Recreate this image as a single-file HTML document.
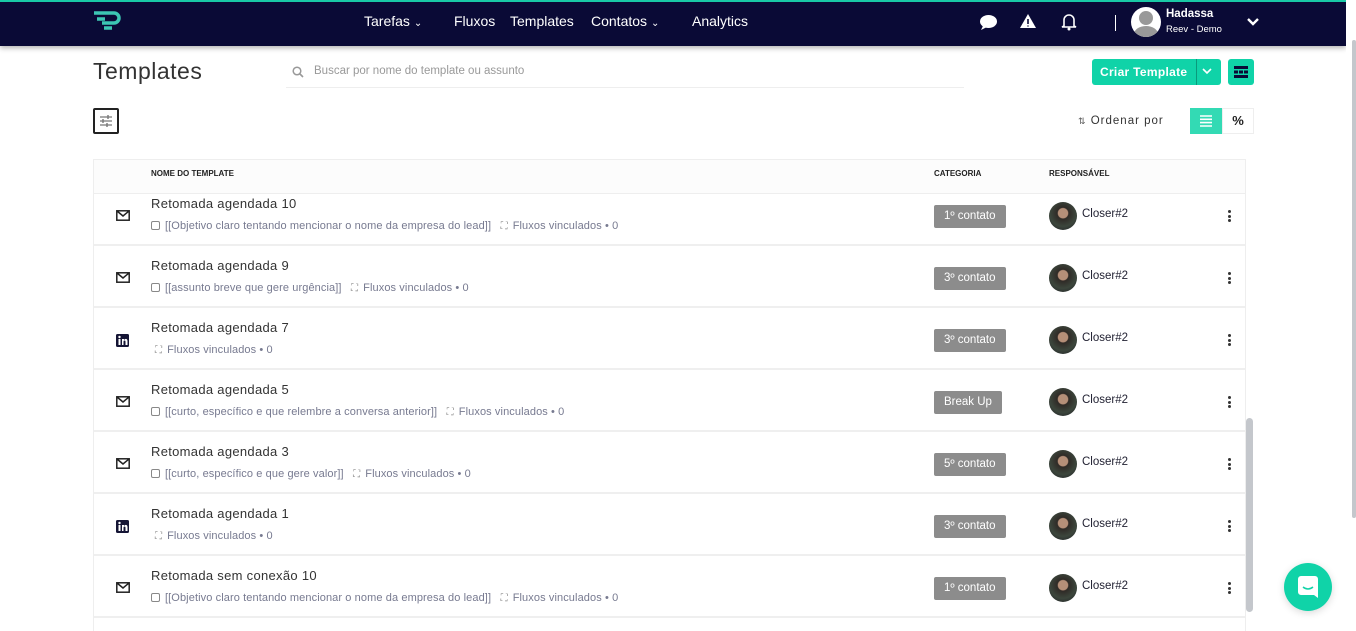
<!DOCTYPE html>
<html><head><meta charset="utf-8"><style>
*{box-sizing:border-box;margin:0;padding:0}
body{width:1356px;height:631px;overflow:hidden;background:#fff;font-family:"Liberation Sans",sans-serif;color:#2b2b3b;position:relative}
.nav{position:absolute;left:0;top:0;width:1346px;height:46px;background:#0a0a36;border-top:2px solid #19c9a6;box-shadow:0 2px 5px rgba(0,0,0,.3)}
.nav .it{position:absolute;top:11px;color:#fff;font-size:14px}
.abs{position:absolute}
.title{left:93px;top:58px;font-size:23px;color:#333;letter-spacing:.5px}
.search{left:286px;top:58px;width:678px;height:30px;border-bottom:1px solid #eee;font-size:11.5px;color:#999}
.btn{background:#10d3a8;color:#fff;border-radius:3px}
.table{left:93px;top:159px;width:1153px;height:472px;border:1px solid #eee;border-bottom:none;overflow:hidden}
.head{height:34px;background:#fcfcfc;border-bottom:1px solid #eee;font-size:8px;font-weight:bold;color:#222;position:relative}
.head span{position:absolute;top:9px}
.rows{margin-top:-10px}
.row{height:62px;border-bottom:2px solid #efefef;position:relative}
.row .name{position:absolute;left:57px;top:12px;font-size:13px;color:#333;letter-spacing:.3px}
.row .sub{position:absolute;left:57px;top:36px;font-size:11px;color:#777a90;white-space:nowrap;letter-spacing:.1px}
.row .ic{position:absolute;left:22px;top:26px}
.tag{position:absolute;left:840px;top:21px;height:23px;line-height:23px;padding:0 10px;background:#8c8c8c;color:#fff;font-size:11.5px;border-radius:2px}
.av{position:absolute;left:955px;top:18px;width:28px;height:28px;border-radius:50%;background:radial-gradient(circle at 50% 40%,#b58f78 0 22%,#2f2a26 26%,#3c463c 60%,#1b1b22 100%)}
.who{position:absolute;left:988px;top:24px;font-size:11.5px;color:#223}
.dots{position:absolute;left:1134px;top:26px;width:3px}
.dots i{display:block;width:3px;height:3px;background:#333;border-radius:50%;margin-bottom:1.5px}
</style></head><body>
<div class="nav">
 <svg class="abs" style="left:93px;top:8px" width="30" height="22" viewBox="0 0 30 22"><path d="M1 3h20a5 5 0 0 1 0 10H9" stroke="#3cc6b4" stroke-width="3.5" fill="none"/><path d="M4 9h8M11 18h8" stroke="#3cc6b4" stroke-width="3.5"/></svg>
 <div class="it" style="left:364px">Tarefas <span style="font-size:10px">⌄</span></div>
 <div class="it" style="left:454px">Fluxos</div>
 <div class="it" style="left:510px">Templates</div>
 <div class="it" style="left:591px">Contatos <span style="font-size:10px">⌄</span></div>
 <div class="it" style="left:692px">Analytics</div>
 <svg class="abs" style="left:979px;top:12px" width="19" height="17"><ellipse cx="9.5" cy="7.5" rx="8.5" ry="6.5" fill="#fff"/><path d="M4 12l-2 4 6-3z" fill="#fff"/></svg>
 <svg class="abs" style="left:1019px;top:11px" width="18" height="16"><path d="M9 1L17 15H1z" fill="#fff"/><path d="M9 6v5M9 12.5v1" stroke="#0a0a36" stroke-width="1.6"/></svg>
 <svg class="abs" style="left:1061px;top:10px" width="16" height="19"><path d="M3 14V8a5 5 0 0 1 10 0v6l2 1H1z" fill="none" stroke="#fff" stroke-width="1.6"/><circle cx="8" cy="17" r="1.5" fill="#fff"/></svg>
 <div class="abs" style="left:1115px;top:13px;width:1px;height:16px;background:#fff"></div>
 <div class="abs" style="left:1131px;top:5px;width:30px;height:30px;border-radius:50%;background:#fff;overflow:hidden"><div style="position:absolute;left:8px;top:4px;width:14px;height:14px;border-radius:50%;background:#999"></div><div style="position:absolute;left:3px;top:19px;width:24px;height:16px;border-radius:50%;background:#999"></div></div>
 <div class="abs" style="left:1166px;top:6px;color:#fff;font-size:11.5px;font-weight:bold">Hadassa</div>
 <div class="abs" style="left:1166px;top:22px;color:#fff;font-size:9.5px">Reev - Demo</div>
 <svg class="abs" style="left:1246px;top:15px" width="14" height="10"><path d="M2 2l5 5 5-5" stroke="#fff" stroke-width="2.4" fill="none"/></svg>
</div>
<div class="abs" style="left:1346px;top:0;width:10px;height:631px;background:#fff"></div>
<div class="abs" style="left:1352px;top:40px;width:4px;height:478px;background:#c4c7cc;border-radius:2px"></div>

<div class="abs title">Templates</div>
<div class="abs search"><svg class="abs" style="left:6px;top:8px" width="12" height="12"><circle cx="5" cy="5" r="3.8" stroke="#999" stroke-width="1.5" fill="none"/><path d="M8 8l3 3" stroke="#999" stroke-width="1.6"/></svg><span class="abs" style="left:28px;top:7px">Buscar por nome do template ou assunto</span></div>
<div class="abs btn" style="left:1092px;top:59px;width:129px;height:26px"><span class="abs" style="left:8px;top:6px;font-size:12px;font-weight:bold;letter-spacing:.3px">Criar Template</span><div class="abs" style="left:104px;top:0;width:1px;height:26px;background:#0a9a7c"></div><svg class="abs" style="left:110px;top:9px" width="10" height="7"><path d="M1 1l4 4 4-4" stroke="#fff" stroke-width="1.6" fill="none"/></svg></div>
<div class="abs btn" style="left:1228px;top:59px;width:26px;height:26px"><svg class="abs" style="left:6px;top:7px" width="14" height="12"><path d="M0 0h14v3H0zM0 4.5h4v3H0zM5 4.5h4v3H5zM10 4.5h4v3h-4zM0 9h14v3H0z" fill="#0a0a36"/></svg></div>
<div class="abs" style="left:93px;top:108px;width:26px;height:26px;border:2px solid #222;border-radius:2px"><svg class="abs" style="left:5px;top:5px" width="12" height="12"><path d="M0 2h12M0 6h12M0 10h12" stroke="#777" stroke-width="1.2"/><path d="M8 0v4M3 4v4M7 8v4" stroke="#777" stroke-width="1.4"/></svg></div>
<div class="abs" style="left:1078px;top:115px;font-size:11.5px;color:#333;letter-spacing:1px"><span style="font-size:9px;color:#555">⇅</span> Ordenar por</div>
<div class="abs" style="left:1190px;top:108px;width:32px;height:26px;background:#33dab4"><svg class="abs" style="left:10px;top:7px" width="12" height="12"><path d="M0 1h12M0 4.3h12M0 7.6h12M0 11h12" stroke="#fff" stroke-width="1.6"/></svg></div>
<div class="abs" style="left:1222px;top:108px;width:32px;height:26px;border:1px solid #eee;text-align:center;line-height:24px;font-size:13px;font-weight:bold;color:#222">%</div>

<div class="abs table">
 <div class="head"><span style="left:57px">NOME DO TEMPLATE</span><span style="left:840px">CATEGORIA</span><span style="left:955px">RESPONSÁVEL</span></div>
 <div class="rows" id="rows"></div>
</div>
<div class="abs" style="left:1246px;top:418px;width:7px;height:194px;background:#c4c7cc;border-radius:4px"></div>
<div class="abs" style="left:1284px;top:563px;width:48px;height:48px;border-radius:50%;background:#10d3a8;box-shadow:0 2px 8px rgba(0,0,0,.15)"><svg class="abs" style="left:14px;top:13px" width="20" height="22"><path d="M3 0h14a3 3 0 0 1 3 3v19l-4-3H3a3 3 0 0 1-3-3V3a3 3 0 0 1 3-3z" fill="#fff"/><path d="M5 11q5 4 10 0" stroke="#10d3a8" stroke-width="1.5" fill="none"/></svg></div>
<script>
var mail='<svg class="ic" width="14" height="11"><rect x="0.8" y="0.8" width="12.4" height="9.4" fill="none" stroke="#222" stroke-width="1.5"/><path d="M1 1l6 5 6-5" fill="none" stroke="#222" stroke-width="1.5"/></svg>';
var li='<svg class="ic" width="13" height="13"><rect width="13" height="13" rx="1.5" fill="#151535"/><rect x="2.5" y="5" width="2" height="6" fill="#fff"/><circle cx="3.5" cy="3" r="1.2" fill="#fff"/><path d="M6 11V5h2v1q1-1.5 2.5-1 1 .4 1 2V11h-2V7.5q0-1-1-1t-1 1V11z" fill="#fff"/></svg>';
var subI='<span style="display:inline-block;width:9px;height:9px;border:1px solid #888;border-radius:2px;vertical-align:-1px;margin-right:5px"></span>';
var flo='<span style="font-size:10px;color:#888;margin-right:5px">⛶</span>Fluxos vinculados • 0';
var d=[["Retomada agendada 10",mail,"[[Objetivo claro tentando mencionar o nome da empresa do lead]]","1º contato"],
["Retomada agendada 9",mail,"[[assunto breve que gere urgência]]","3º contato"],
["Retomada agendada 7",li,null,"3º contato"],
["Retomada agendada 5",mail,"[[curto, específico e que relembre a conversa anterior]]","Break Up"],
["Retomada agendada 3",mail,"[[curto, específico e que gere valor]]","5º contato"],
["Retomada agendada 1",li,null,"3º contato"],
["Retomada sem conexão 10",mail,"[[Objetivo claro tentando mencionar o nome da empresa do lead]]","1º contato"]];
var h='';d.forEach(function(r){h+='<div class="row">'+r[1]+'<div class="name">'+r[0]+'</div><div class="sub"'+(r[2]?'':' style="left:61px"')+'>'+(r[2]?subI+r[2]+'&nbsp;&nbsp;&nbsp;':'')+flo+'</div><div class="tag">'+r[3]+'</div><div class="av"></div><div class="who">Closer#2</div><div class="dots"><i></i><i></i><i></i></div></div>';});
document.getElementById('rows').innerHTML=h;
</script>
</body></html>
